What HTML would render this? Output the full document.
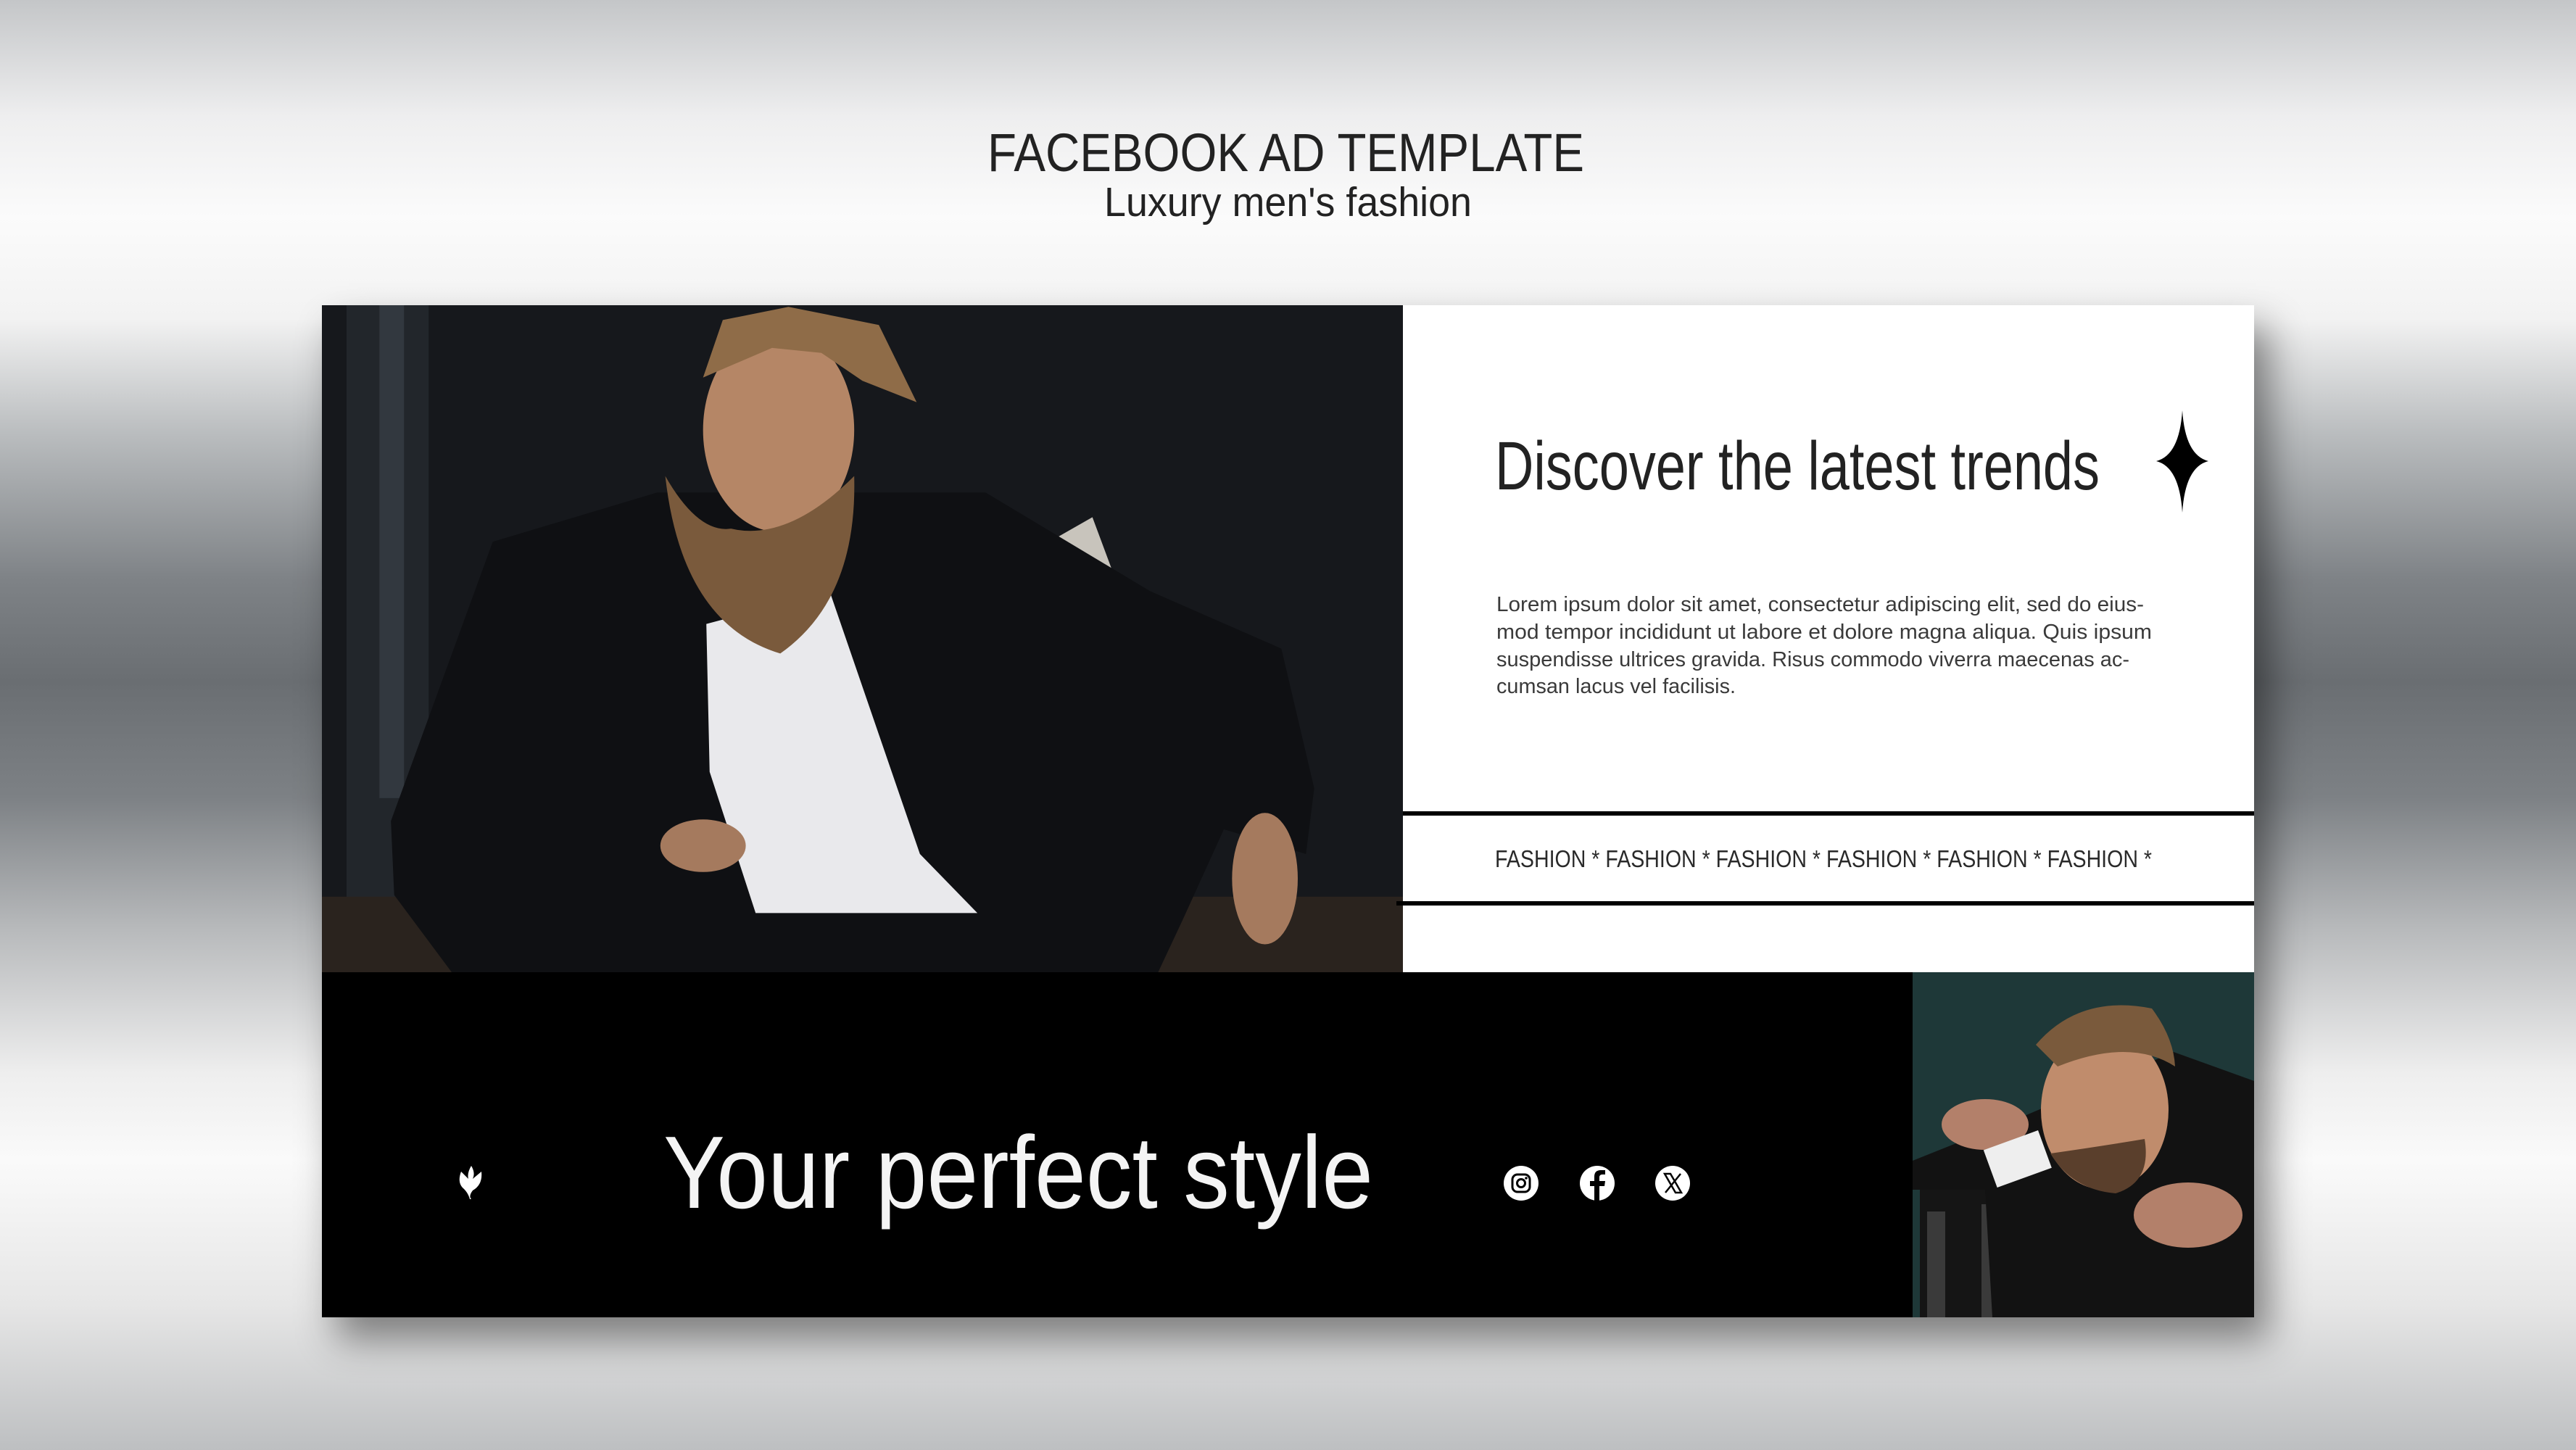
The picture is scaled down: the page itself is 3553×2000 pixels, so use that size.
<!DOCTYPE html>
<html><head><meta charset="utf-8"><style>
html,body{margin:0;padding:0}
body{width:3553px;height:2000px;position:relative;overflow:hidden;
background:linear-gradient(180deg,#c4c6c8 0%,#eeeeef 8%,#fbfbfb 15%,#f2f2f2 22%,#b9bcbe 30%,#7e8286 40%,#6a6e72 47%,#7d8185 55%,#b7b9bb 64%,#eeeeee 74%,#fafafa 80%,#e6e6e6 90%,#bdbfc1 100%);
font-family:"Liberation Sans",sans-serif}
.card{position:absolute;left:444px;top:421px;width:2665px;height:1396px;box-shadow:20px 30px 50px rgba(0,0,0,.45);background:#fff}
svg{position:absolute;left:0;top:0}
</style></head><body>
<div class="card"></div>
<svg width="3553" height="2000" viewBox="0 0 3553 2000">
  <svg x="444" y="421" width="1491" height="920" viewBox="0 0 658 406" preserveAspectRatio="none">
    <rect width="658" height="406" fill="#16181c"/>
    <rect x="15" y="0" width="50" height="406" fill="#262a30" opacity=".8"/>
    <rect x="35" y="0" width="15" height="300" fill="#3e444c" opacity=".6"/>
    <rect x="0" y="360" width="658" height="46" fill="#2a231e"/>
    <g transform="translate(-196,-186)">
      <path d="M600 330 L630 335 L665 315 L678 350 L700 520 L690 560 L640 545 L600 420 Z" fill="#c8c4bc"/>
      <path d="M238 500 L300 330 L400 300 L600 300 L700 360 L780 395 L800 480 L795 520 L745 505 L720 560 L705 592 L275 592 L240 545 Z" fill="#0f1013"/>
      <polygon points="430,380 505,360 560,520 595,556 460,556 432,470" fill="#e9e9ec"/>
      <ellipse cx="474" cy="262" rx="46" ry="62" fill="#b58666"/>
      <polygon points="428,230 440,195 480,187 535,198 558,245 525,232 500,215 470,212" fill="#8f6c48"/>
      <path d="M405 290 Q425 325 445 322 Q480 330 520 290 Q522 365 475 398 Q415 380 405 290 Z" fill="#7a5a3c"/>
      <ellipse cx="428" cy="515" rx="26" ry="16" fill="#a57a5e"/>
      <ellipse cx="770" cy="535" rx="20" ry="40" fill="#a57a5e"/>
    </g>
  </svg>
  <rect x="444" y="1341" width="2194" height="476" fill="#000"/>
  <svg x="2638" y="1341" width="471" height="476" viewBox="0 0 471 476">
    <rect width="471" height="476" fill="#1e3838"/>
    <rect x="10" y="300" width="170" height="176" fill="#151515"/>
    <rect x="20" y="330" width="25" height="146" fill="#3a3a3a"/>
    <rect x="95" y="320" width="22" height="156" fill="#3a3a3a"/>
    <path d="M0 260 L150 200 L360 110 L471 150 L471 476 L110 476 L100 300 L0 300 Z" fill="#121212"/>
    <ellipse cx="265" cy="190" rx="88" ry="110" fill="#c08c6c"/>
    <path d="M170 100 Q230 30 330 50 Q360 90 362 130 Q300 90 200 130 Z" fill="#7a5a3c"/>
    <path d="M190 250 Q260 240 320 230 Q330 290 280 305 Q220 300 190 250 Z" fill="#5a3f2c"/>
    <ellipse cx="100" cy="210" rx="60" ry="35" fill="#b3806a"/>
    <rect x="105" y="230" width="80" height="55" fill="#eee" transform="rotate(-20 145 258)"/>
    <ellipse cx="380" cy="335" rx="75" ry="45" fill="#b3806a"/>
  </svg>
  <rect x="1935" y="1119" width="1174" height="6" fill="#000"/>
  <rect x="1926" y="1243" width="1183" height="6" fill="#000"/>
  <path d="M3010 566 Q3014 628 3046 636 Q3014 644 3010 707 Q3006 644 2974 636 Q3006 628 3010 566 Z" fill="#000"/>
  <text x="1362" y="236" font-size="74" fill="#222" textLength="823" lengthAdjust="spacingAndGlyphs">FACEBOOK AD TEMPLATE</text>
  <text x="1523" y="298" font-size="57" fill="#222" textLength="507" lengthAdjust="spacingAndGlyphs">Luxury men's fashion</text>
  <text x="2062" y="675" font-size="95" fill="#222" textLength="834" lengthAdjust="spacingAndGlyphs">Discover the latest trends</text>
  <g font-size="29" fill="#3a3a3a">
    <text x="2064" y="843" textLength="893" lengthAdjust="spacingAndGlyphs">Lorem ipsum dolor sit amet, consectetur adipiscing elit, sed do eius-</text>
    <text x="2064" y="881" textLength="904" lengthAdjust="spacingAndGlyphs">mod tempor incididunt ut labore et dolore magna aliqua. Quis ipsum</text>
    <text x="2064" y="919" textLength="873" lengthAdjust="spacingAndGlyphs">suspendisse ultrices gravida. Risus commodo viverra maecenas ac-</text>
    <text x="2064" y="956" textLength="330" lengthAdjust="spacingAndGlyphs">cumsan lacus vel facilisis.</text>
  </g>
  <text x="2062" y="1196" font-size="33" fill="#2a2a2a" textLength="906" lengthAdjust="spacingAndGlyphs">FASHION * FASHION * FASHION * FASHION * FASHION * FASHION *</text>
  <text x="915" y="1666" font-size="142" fill="#f4f4f4" textLength="979" lengthAdjust="spacingAndGlyphs">Your perfect style</text>
  <path d="M650 1608 Q656 1618 652 1626 L664 1616 Q666 1634 652 1642 Q646 1650 650 1654 L648 1654 Q646 1646 640 1640 Q630 1632 636 1616 L646 1626 Q644 1618 650 1608 Z" fill="#fff"/>
  <circle cx="2098" cy="1632" r="24" fill="#fff"/>
  <rect x="2086" y="1620" width="24" height="24" rx="7" fill="none" stroke="#000" stroke-width="3"/>
  <circle cx="2098" cy="1632" r="5.5" fill="none" stroke="#000" stroke-width="3"/>
  <circle cx="2105" cy="1625" r="1.8" fill="#000"/>
  <circle cx="2203" cy="1632" r="24" fill="#fff"/>
  <path d="M2206 1656 L2206 1636 L2213 1636 L2214 1629 L2206 1629 L2206 1624 Q2206 1620 2210 1620 L2214 1620 L2214 1614 L2208 1614 Q2199 1614 2199 1623 L2199 1629 L2193 1629 L2193 1636 L2199 1636 L2199 1656 Z" fill="#000"/>
  <circle cx="2307" cy="1632" r="24" fill="#fff"/>
  <path d="M2296 1619 L2304 1619 L2319 1645 L2311 1645 Z" fill="none" stroke="#000" stroke-width="2.5"/>
  <path d="M2318 1619 L2297 1645" stroke="#000" stroke-width="2.5"/>
</svg>
</body></html>
